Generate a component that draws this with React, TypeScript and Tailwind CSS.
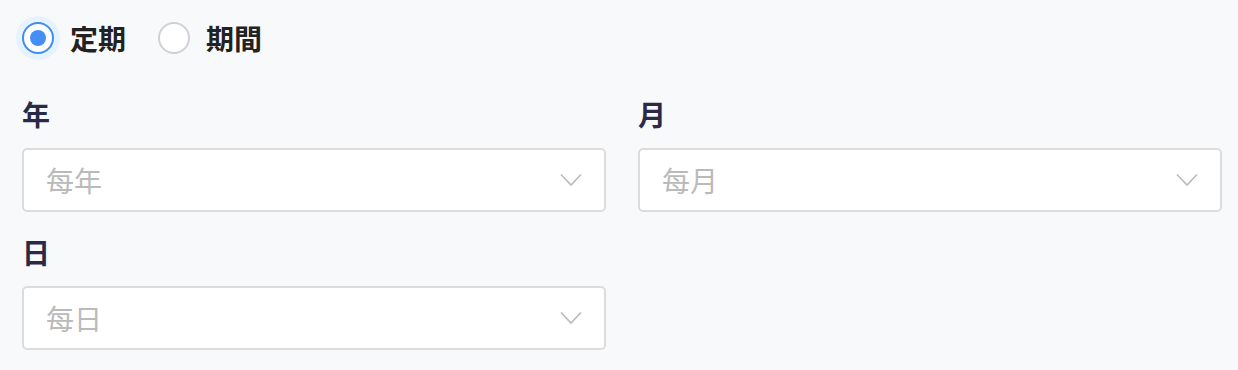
import { useState } from 'react'

const font = '"Noto Sans CJK JP", "Noto Sans", sans-serif'

function Radio({ checked, label, onClick }: { checked: boolean; label: string; onClick: () => void }) {
  return (
    <button type="button" onClick={onClick} className="flex items-center">
      <span className="relative flex h-8 w-8 items-center justify-center">
        {checked && <span className="absolute -inset-[6px] rounded-full bg-[#e6f3ff]" />}
        <span
          className={
            checked
              ? 'relative flex h-8 w-8 items-center justify-center rounded-full border-2 border-[#3f8cf2] bg-white'
              : 'relative h-8 w-8 rounded-full border-2 border-[#cfd1d6] bg-white'
          }
        >
          {checked && <span className="h-4 w-4 rounded-full bg-[#448ff5]" />}
        </span>
      </span>
      <span className="ml-4 text-[28px] font-bold leading-8 text-[#222222]">{label}</span>
    </button>
  )
}

function SelectBox({ label, placeholder }: { label: string; placeholder: string }) {
  return (
    <div className="flex flex-col">
      <div className="mb-5 text-[28px] font-bold leading-[28px] text-[#2a2946]">{label}</div>
      <div className="flex h-16 items-center justify-between rounded-[5px] border-2 border-[#dcdcdc] bg-white pl-[22px] pr-[22px]">
        <span className="text-[28px] leading-none text-[#bababa]">{placeholder}</span>
        <svg width="22" height="14" viewBox="0 0 22 14" fill="none">
          <path d="M1 1.5 L11 12 L21 1.5" stroke="#bdbdbd" strokeWidth="1.8" />
        </svg>
      </div>
    </div>
  )
}

export default function App() {
  const [mode, setMode] = useState('teiki')

  return (
    <div className="h-[370px] w-[1238px] bg-[#f8f9fb] pl-[22px] pr-4 pt-[22px]" style={{ fontFamily: font }}>
      {/* Period type */}
      <div className="flex items-center gap-8">
        <Radio checked={mode === 'teiki'} label="定期" onClick={() => setMode('teiki')} />
        <Radio checked={mode === 'kikan'} label="期間" onClick={() => setMode('kikan')} />
      </div>

      {/* Selects */}
      <div className="mt-[46px] grid grid-cols-2 gap-x-8 gap-y-[26px]">
        <SelectBox label="年" placeholder="每年" />
        <SelectBox label="月" placeholder="每月" />
        <SelectBox label="日" placeholder="每日" />
      </div>
    </div>
  )
}
